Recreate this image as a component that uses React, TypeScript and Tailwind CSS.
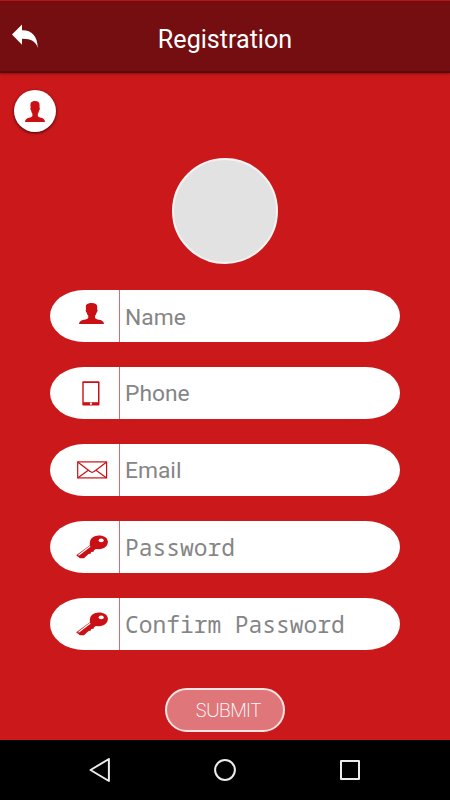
import type { ReactNode } from "react";

interface Field {
  id: string;
  label: string;
  type: string;
  icon: ReactNode;
  className: string;
}

function PersonIcon({ className }: { className: string }) {
  return (
    <svg viewBox="0 0 26 21" preserveAspectRatio="none" className={className} fill="#cb1015">
      <path d="M7.400 2C8.600.5 11 0 13.200 0c3.700 0 5.800 1.200 5.700 3.800v2.700c.8.400.4 2.600-.7 3.200-.2 1.300-.7 2.300-1.500 3v2.200c.5.900 1.900 1.400 4.300 1.900 3.200.7 4.700 1.600 5 4.200H0c.3-2.600 2-3.500 5.200-4.200 2.500-.5 4-1 4.400-1.900v-2.200c-.8-.7-1.300-1.700-1.500-3-1.100-.6-1.500-2.800-.7-3.200-.3-1.500-.5-3.200 0-4.500Z" />
    </svg>
  );
}

function TabletIcon() {
  return (
    <svg viewBox="0 0 18 25" className="-ml-px mt-0.5 h-[25px] w-[18px]">
      <rect x="0.300" y="0.300" width="17.200" height="24.200" rx="1" fill="#cb1015" />
      <rect x="1.700" y="2" width="14.300" height="19.200" fill="#fff" />
      <circle cx="8.900" cy="22.700" r="1.100" fill="#fff" />
    </svg>
  );
}

function MailIcon() {
  return (
    <svg viewBox="0 0 31 18" className="ml-0.5 h-[18px] w-[31px]" fill="none" stroke="#cb1015">
      <rect x="0.700" y="0.900" width="28.900" height="16" strokeWidth="1.200" />
      <path d="M1 1.200l12.100 9.200c1.300 1.100 2.800 1.100 4.100 0L29.300 1.200M1 16.700l10.300-7.500M29.300 16.700L19 9.200" strokeWidth="1.200" />
    </svg>
  );
}

function KeyIcon() {
  return (
    <svg viewBox="0 0 32 24" className="ml-0.5 h-6 w-8" fill="#cb1015">
      <path d="M14.100 6.200C14.700 2.700 18.300.5 22.600.4c5.200-.1 9.300 2.300 9.300 6.400 0 4.400-3.900 7.400-8.900 7.400l-3-.3-1.800 1.200-.7 1.700-2.300.3-.7 1.600-1.900.2-4.700 4.300-4 .1-3.700-3L13.900 10.200c-.3-1.300-.1-2.700.2-4Z" />
      <path d="M2.500 20.200L14.200 11.200" stroke="#fff" strokeWidth="1.100" />
      <ellipse cx="25.200" cy="5.400" rx="2.600" ry="1.800" fill="#fff" />
    </svg>
  );
}

const fields: Field[] = [
  { id: "name", label: "Name", type: "text", icon: <PersonIcon className="-mt-1 h-[21px] w-[25px]" />, className: "pt-1 text-[22.800px]" },
  { id: "phone", label: "Phone", type: "tel", icon: <TabletIcon />, className: "pt-[3px] text-[22.800px]" },
  { id: "email", label: "Email", type: "email", icon: <MailIcon />, className: "pt-[3px] text-[22.800px]" },
  { id: "password", label: "Password", type: "password", icon: <KeyIcon />, className: "pt-[3px] font-['Noto_Sans_Mono','Droid_Sans_Mono','DejaVu_Sans_Mono',monospace] text-[22.900px]" },
  { id: "confirm", label: "Confirm Password", type: "password", icon: <KeyIcon />, className: "pt-[3px] font-['Noto_Sans_Mono','Droid_Sans_Mono','DejaVu_Sans_Mono',monospace] text-[22.900px]" },
];

function FormField({ field }: { field: Field }) {
  return (
    <label className="flex h-[51.700px] w-[350px] overflow-hidden rounded-[34px/26px] bg-white">
      <span className="flex w-[69px] shrink-0 items-center justify-center pl-[13px]">{field.icon}</span>
      <span className="w-px shrink-0 bg-[#e0686b]" />
      <input
        id={field.id}
        type={field.type}
        placeholder={field.label}
        className={`min-w-0 flex-1 bg-transparent pl-[5px] text-black outline-none placeholder:text-[#858585] ${field.className}`}
      />
    </label>
  );
}

export default function App() {
  return (
    <div className="flex h-[800px] w-[450px] flex-col overflow-hidden bg-[#cb181b] font-[Roboto,sans-serif]">
      <header className="relative z-10 grid h-[73px] shrink-0 grid-cols-[50px_1fr_50px] items-center border-t border-b-2 border-t-[#b51519] border-b-[#570b0d] bg-[#750e10] shadow-[0_1px_2px_rgba(80,0,0,0.5)]">
        <button aria-label="Back" className="pl-3 pt-px">
          <svg viewBox="0 0 26 25" className="h-[25px] w-[26px]" fill="#fff">
            <path d="M0 10.500L10 .5v5.800c9.500-.2 15.700 5.700 15.700 17.700-1.400-6.300-6.500-9.400-15.700-9.300v6Z" />
          </svg>
        </button>
        <h1 className="pt-[7px] text-center text-[25.100px] leading-none text-white">Registration</h1>
      </header>

      <main className="flex flex-1 flex-col items-center">
        <div className="mt-[17px] ml-3.5 flex size-[42px] items-center justify-center self-start rounded-full bg-white shadow-[0_1px_3px_rgba(50,0,0,0.9)]">
          <PersonIcon className="h-[21px] w-5" />
        </div>
        <div className="mt-[26px] size-[106px] rounded-full border-2 border-[#f7f3f3] bg-[#e2e2e2]" />

        <form className="mt-[26px] flex flex-col items-center gap-[25.400px]">
          {fields.map((field) => (
            <FormField key={field.id} field={field} />
          ))}
          <button
            type="button"
            className="mt-[13px] h-11 w-[120px] rounded-[22px] border-2 border-[#f9e4e4] bg-[#df7679] pt-0.5 pl-1.5 font-[Inter,sans-serif] text-[19px] font-extralight tracking-[-1px] text-white"
          >
            SUBMIT
          </button>
        </form>
      </main>

      <nav className="flex h-[60px] shrink-0 items-center justify-between bg-black px-[88px]">
        <svg viewBox="0 0 24 24" className="size-6" fill="none" stroke="#ececec" strokeWidth="2" strokeLinejoin="round">
          <path d="M2.500 12L20.900 1v22Z" />
        </svg>
        <svg viewBox="0 0 24 24" className="size-6" fill="none" stroke="#ececec" strokeWidth="2">
          <circle cx="12" cy="12" r="9.900" />
        </svg>
        <svg viewBox="0 0 24 24" className="size-6" fill="none" stroke="#ececec" strokeWidth="2" strokeLinejoin="round">
          <rect x="3" y="3" width="18" height="18" />
        </svg>
      </nav>
    </div>
  );
}
